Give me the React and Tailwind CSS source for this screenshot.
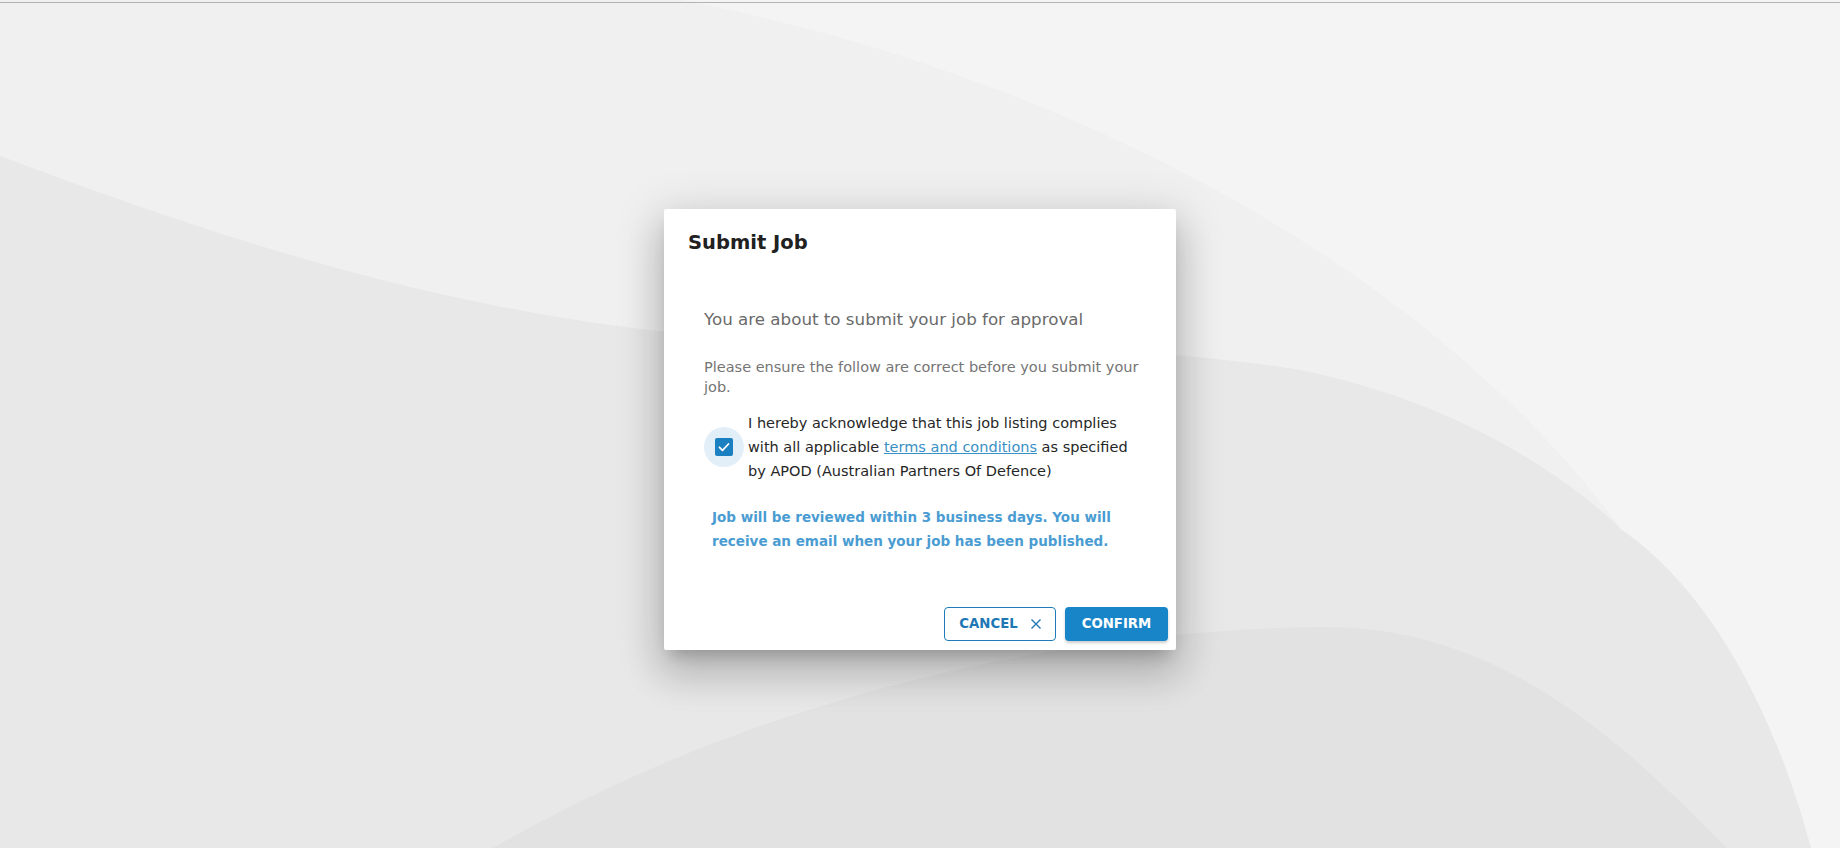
import React from 'react';

const Backdrop = () => (
  <svg className="absolute inset-0 w-full h-full" viewBox="0 0 1840 848" preserveAspectRatio="none">
    <rect width="1840" height="848" fill="#f0f0f0" />
    <path d="M681,0 C1000,60 1400,230 1622,530 C1680,570 1760,660 1811,848 L1840,848 L1840,0 Z" fill="#f4f4f4" />
    <path
      d="M0,156 C250,250 500,330 800,342 C1000,348 1150,345 1300,370 C1450,400 1560,470 1622,530 C1680,570 1760,660 1811,848 L0,848 Z"
      fill="#e8e8e8"
    />
    <path d="M493,848 C750,700 1050,630 1320,627 C1500,625 1620,740 1727,848 Z" fill="#e2e2e2" />
    <rect x="0" y="2" width="1840" height="1" fill="#b3b3b3" />
  </svg>
);

const CheckBox = () => (
  <div className="flex items-center justify-center w-10 h-10 rounded-full bg-[#e3eff8] shrink-0">
    <svg width="18" height="18" viewBox="0 0 18 18">
      <rect width="18" height="18" rx="2" fill="#1b80c2" />
      <path d="M4.5 9.3l3 3 6-6.3" fill="none" stroke="#fff" strokeWidth="1.8" strokeLinecap="round" strokeLinejoin="round" />
    </svg>
  </div>
);

const SubmitJobDialog = () => {
  return (
    <div className="flex flex-col w-[512px] h-[441px] bg-white rounded-[2px] shadow-[0_11px_15px_-7px_rgba(0,0,0,0.2),0_24px_38px_3px_rgba(0,0,0,0.14),0_9px_46px_8px_rgba(0,0,0,0.12)]">
      <h2 className="pt-[22px] px-6 text-[19.5px] leading-6 font-bold text-[#212121]">Submit Job</h2>

      <p className="mt-[52px] pl-10 text-[16.7px] leading-6 text-[#6a6a6a] whitespace-nowrap">
        You are about to submit your job for approval
      </p>

      <p className="mt-[26px] pl-10 text-[14.5px] leading-5 text-[#757575] whitespace-nowrap">
        Please ensure the follow are correct before you submit your
        <br />
        job.
      </p>

      <div className="mt-[14px] pl-10 flex items-center gap-1">
        <CheckBox />
        <p className="text-[14.5px] leading-6 text-[#262626] whitespace-nowrap">
          I hereby acknowledge that this job listing complies
          <br />
          with all applicable <span className="text-[#3a8fc6] underline">terms and conditions</span> as specified
          <br />
          by APOD (Australian Partners Of Defence)
        </p>
      </div>

      <p className="mt-[22px] pl-12 text-[13.5px] leading-6 font-bold text-[#4a9cd2] whitespace-nowrap">
        Job will be reviewed within 3 business days. You will
        <br />
        receive an email when your job has been published.
      </p>

      <div className="mt-auto flex justify-end gap-[9px] pr-2 pb-[9px]">
        <button className="flex items-center justify-center gap-[13px] w-[112px] h-[34px] border border-[#1f7ab8] rounded text-[13.3px] font-bold text-[#1f78b5]">
          CANCEL
          <svg width="10" height="10" viewBox="0 0 10 10">
            <path d="M0.5 0.5l9 9M9.5 0.5l-9 9" stroke="#1f78b5" strokeWidth="1.4" />
          </svg>
        </button>
        <button className="flex items-center justify-center w-[103px] h-[34px] rounded bg-[#1885c8] text-[13.3px] font-bold text-white shadow-[0_2px_3px_rgba(0,0,0,0.2)]">
          CONFIRM
        </button>
      </div>
    </div>
  );
};

export default function App() {
  return (
    <div className="relative h-screen overflow-hidden font-['DejaVu_Sans',sans-serif]">
      <Backdrop />
      <div className="relative h-full flex items-center justify-center pt-[11px]">
        <SubmitJobDialog />
      </div>
    </div>
  );
}
